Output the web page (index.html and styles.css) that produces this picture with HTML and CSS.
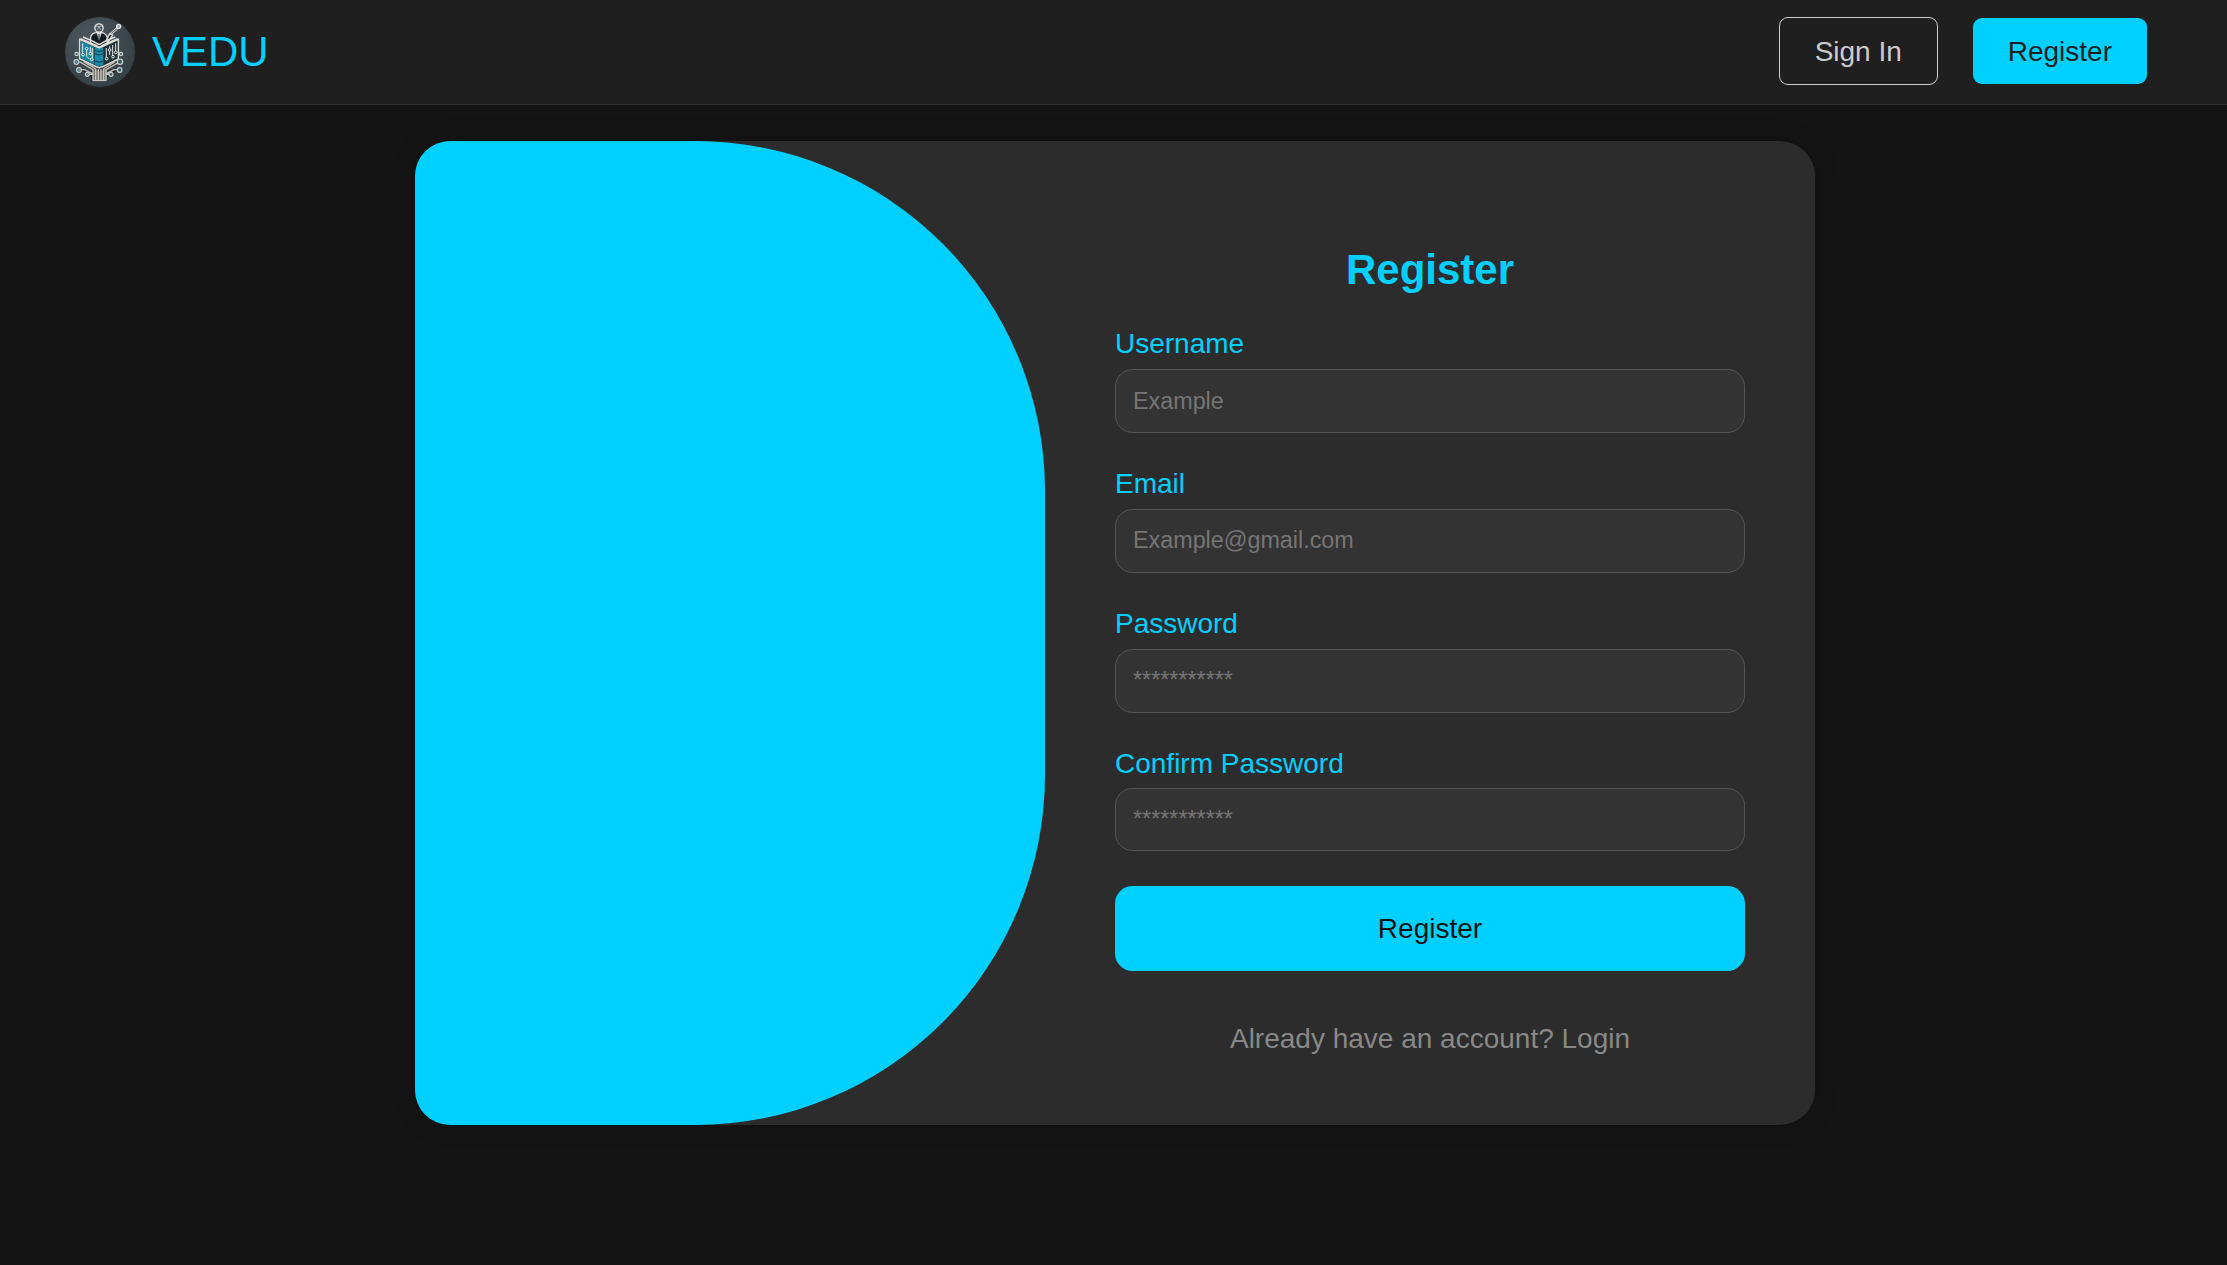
FILE: index.html
```html
<!DOCTYPE html>
<html lang="en">
<head>
<meta charset="utf-8">
<title>VEDU</title>
<link rel="stylesheet" href="styles.css">
</head>
<body>
<header class="navbar">
  <a class="brand">
    <svg class="logo" viewBox="15 15 210 210" aria-hidden="true">
      <defs>
        <radialGradient id="disc" cx="35%" cy="30%" r="75%">
          <stop offset="0" stop-color="#4c565d"/>
          <stop offset="1" stop-color="#334046"/>
        </radialGradient>
      </defs>
      <circle cx="120" cy="120" r="105" fill="url(#disc)"/>
      <g fill="none" stroke="#1b2429" stroke-width="7">
        <path d="M60 150L98 171V206H136V171L174 150M56 174H70L96 194M181 174H166L140 194"/>
      </g>
      <path d="M92 99V76Q94 65 107 62H127Q140 66 142 78V97L118 106Z" fill="#101a21" stroke="#dcdcd8" stroke-width="4"/>
      <path d="M110 63L117 86L125 63Z" fill="#d9dcda"/>
      <path d="M117 66V84" stroke="#17252d" stroke-width="3"/>
      <circle cx="117" cy="48" r="12.5" fill="#47545c" stroke="#e8e7e4" stroke-width="4"/>
      <path d="M108 44H126M112 40L123 54M122 40L111 54" stroke="#c5c9c9" stroke-width="2"/>
      <path d="M139 85L149 65L158 69L151 80L144 90Z" fill="#253036" stroke="#e2e0dc" stroke-width="4"/>
      <path d="M151 67L176 45" stroke="#dedbd5" stroke-width="7"/>
      <path d="M154 64L172 49" stroke="#374349" stroke-width="2.5"/>
      <circle cx="176" cy="43" r="6" fill="#6ea4b0" stroke="#ece9e4" stroke-width="4"/>
      <path d="M59 82L104 102L118 109L130 102L175 82V141L130 163L118 167L104 162L59 140Z" fill="#173641" stroke="#dedbd3" stroke-width="4.5"/>
      <path d="M62 87L103 106V158L62 138Z" fill="#1787a0"/>
      <path d="M105 106Q117 111 130 106V158Q118 165 105 158Z" fill="#178ba9"/>
      <path d="M106 116Q118 121 129 116M106 126Q118 131 129 126M106 148Q118 153 129 148" fill="none" stroke="#113b4c" stroke-width="3"/>
      <path d="M61 80L97 95Q110 99 118 107Q129 97 140 94L173 80M69 75L100 88L117 98L139 86L166 75" fill="none" stroke="#e4e1d9" stroke-width="4.5"/>
      <path d="M133 107L172 89V137L133 157Z" fill="#25343b"/>
      <g fill="none" stroke="#e4e7e3" stroke-width="3">
        <path d="M68 94V124M80 114V133L88 141M91 104V121M97 108V138M139 108V136M149 103V110M149 118V129M158 99V130M167 94V117"/>
        <circle cx="69" cy="128" r="4"/><circle cx="80" cy="110" r="4"/>
        <circle cx="91" cy="125" r="4"/><circle cx="95" cy="142" r="4"/>
        <circle cx="140" cy="140" r="4"/><circle cx="149" cy="114" r="4"/>
        <circle cx="159" cy="134" r="4"/><circle cx="167" cy="121" r="4"/>
      </g>
      <path d="M98 170L118 178L139 170V206H98Z" fill="#6d6f6c"/>
      <g fill="none" stroke="#c9c5bb" stroke-width="4">
        <path d="M99 206V173L58 149M107 205V171L71 149M115 205V172M123 205V172M131 205V171L165 149M138 206V173L176 151M63 173H73L97 185M173 173H163L139 185M88 187H98M147 187H139M97 206H139"/>
      </g>
      <g fill="#315f6c" stroke="#d0d0cb" stroke-width="3.5">
        <circle cx="50" cy="126" r="5"/><circle cx="183" cy="126" r="5"/>
        <circle cx="49" cy="150" r="7"/><circle cx="180" cy="149" r="8"/>
        <circle cx="57" cy="174" r="7"/><circle cx="179" cy="174" r="7"/>
        <circle cx="82" cy="187" r="6"/><circle cx="153" cy="187" r="6"/>
      </g>
      <g fill="#4aaebe"><circle cx="49" cy="150" r="3"/><circle cx="57" cy="174" r="3"/><circle cx="82" cy="187" r="2.5"/></g>
    </svg>
    <span class="brand-name">VEDU</span>
  </a>
  <nav class="actions">
    <a class="nav-button outline">Sign In</a>
    <a class="nav-button filled">Register</a>
  </nav>
</header>
<main class="card">
  <div class="panel"></div>
  <form class="form">
    <h1 class="title">Register</h1>
    <div class="field">
      <label class="label" for="username">Username</label>
      <input class="input" id="username" type="text" placeholder="Example">
    </div>
    <div class="field">
      <label class="label" for="email">Email</label>
      <input class="input raised" id="email" type="email" placeholder="Example@gmail.com">
    </div>
    <div class="field">
      <label class="label" for="password">Password</label>
      <input class="input raised" id="password" type="password" placeholder="***********">
    </div>
    <div class="field field-last">
      <label class="label" for="confirm">Confirm Password</label>
      <input class="input" id="confirm" type="password" placeholder="***********">
    </div>
    <button class="submit" type="button">Register</button>
    <p class="login">Already have an account? Login</p>
  </form>
</main>
</body>
</html>
```
FILE: styles.css
```css
* {
  box-sizing: border-box;
}

body {
  margin: 0;
  min-height: 100vh;
  background: #141414;
  font-family: "Liberation Sans", Arial, sans-serif;
  font-size: 28px;
  line-height: 32px;
}

.navbar {
  display: flex;
  align-items: center;
  justify-content: space-between;
  height: 105px;
  padding: 0 80px 0 65px;
  border-bottom: 1px solid #333;
  background: #1f1f1f;
}

.brand {
  display: flex;
  align-items: center;
  gap: 17px;
}

.logo {
  display: block;
  width: 70px;
  height: 70px;
}

.brand-name {
  color: #00d0ff;
  font-size: 42px;
  line-height: 48px;
}

.actions {
  display: flex;
  align-items: center;
  gap: 35px;
  padding-bottom: 2px;
}

.nav-button {
  padding: 18px 35px 16px;
  border-radius: 9px;
}

.outline {
  width: 159px;
  padding: 18px 0 16px;
  border: 1px solid #ccc;
  color: #ccc;
  text-align: center;
}

.filled {
  background: #00d0ff;
  color: #1f1f1f;
}

.card {
  display: flex;
  width: 1400px;
  height: 984px;
  margin: 36px 0 0 415px;
  overflow: hidden;
  border-radius: 35px;
  background: #2c2c2c;
  box-shadow: 0 0 26px rgba(0, 0, 0, 0.15);
}

.panel {
  width: 45%;
  border-radius: 0 350px 350px 0;
  background: #00d0ff;
}

.form {
  display: flex;
  flex: 1;
  flex-direction: column;
  padding: 105px 70px 0;
}

.title {
  margin: 0 0 34px;
  color: #00d0ff;
  font-size: 42px;
  line-height: 48px;
  text-align: center;
}

.field {
  display: flex;
  flex-direction: column;
  gap: 9px;
  margin-bottom: 35px;
}

.label {
  color: #00d0ff;
}

.input {
  width: 100%;
  height: 64px;
  padding: 0 17px;
  border: 1px solid #555;
  border-radius: 17.5px;
  background: #333;
  color: #fff;
  font: 23.333px "Liberation Sans", Arial, sans-serif;
}

.raised {
  padding-bottom: 2px;
}

.input::placeholder {
  color: #757575;
}

.field-last {
  gap: 8px;
}

.field-last .input {
  height: 63px;
}

.submit {
  height: 85px;
  padding: 0;
  border: 0;
  border-radius: 17.5px;
  background: #00d0ff;
  color: #141414;
  font: inherit;
}

.login {
  margin: 52px 0 0;
  color: #888;
  text-align: center;
}
```
